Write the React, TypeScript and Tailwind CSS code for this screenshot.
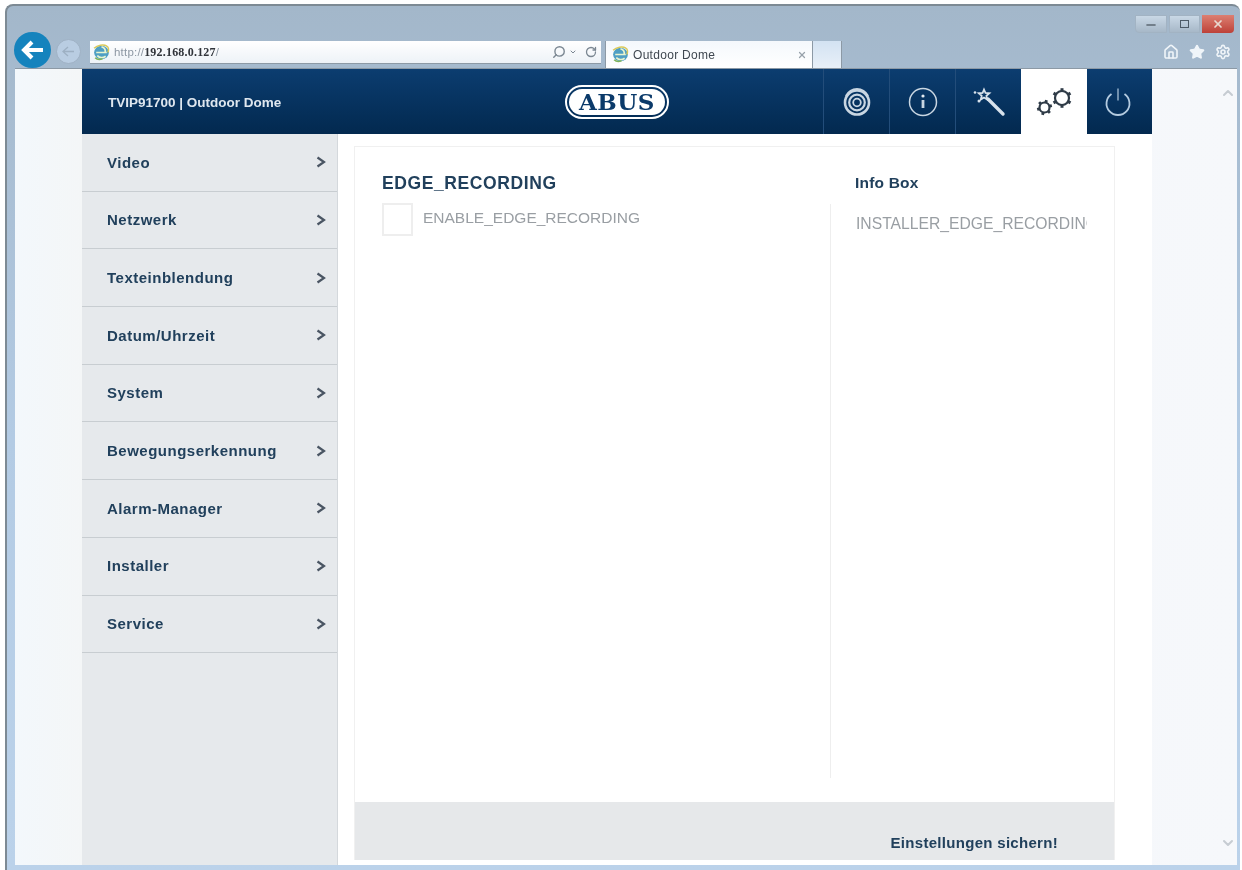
import { ChevronUp, ChevronDown, Home, Star, Settings, Search, RotateCw, X, Minus } from 'lucide-react'

const menuItems = [
  'Video',
  'Netzwerk',
  'Texteinblendung',
  'Datum/Uhrzeit',
  'System',
  'Bewegungserkennung',
  'Alarm-Manager',
  'Installer',
  'Service',
]

// small IE page icon used in address bar and tab
function IeIcon() {
  return (
    <svg width="19" height="19" viewBox="0 0 18 18" className="shrink-0">
      <ellipse cx="9" cy="9" rx="7" ry="6.5" fill="#4f9fc4" />
      <path d="M4 9h10M9 3.5c3 1 4 3 3.5 5.5M5 12c2 2 5 2.5 8 .5" stroke="#e8f4d0" strokeWidth="1.6" fill="none" />
      <path d="M2 5c3-3 9-4 12-2 2 1 2 4 1 6" stroke="#d9c95a" strokeWidth="1.4" fill="none" />
      <path d="M3 14c1 1 4 2 7 1" stroke="#7fb35a" strokeWidth="1.5" fill="none" />
    </svg>
  )
}

function CameraIcon() {
  return (
    <svg width="32" height="32" viewBox="0 0 32 32" fill="none" stroke="#c9d6e2">
      <circle cx="16" cy="16.500" r="12" strokeWidth="2.600" />
      <circle cx="16" cy="16.500" r="7.800" strokeWidth="2.200" />
      <circle cx="16" cy="16.500" r="3.800" strokeWidth="1.800" />
      <path d="M5 10C8 4.500 12 3 16 3s8 1.500 11 7" strokeWidth="2.200" />
    </svg>
  )
}

function InfoIcon() {
  return (
    <svg width="30" height="30" viewBox="0 0 30 30" fill="none" stroke="#c9d6e2">
      <circle cx="15" cy="15" r="13.500" strokeWidth="1.500" />
      <path d="M15 13v8" strokeWidth="2.800" />
      <circle cx="15" cy="9" r="1.600" fill="#e4ebf2" stroke="none" />
    </svg>
  )
}

function WandIcon() {
  return (
    <svg width="34" height="30" viewBox="0 0 34 30" fill="none" stroke="#d8e2ec">
      <path d="M16 12l15 15" strokeWidth="3.400" strokeLinecap="round" />
      <path d="M12 2.500l1.500 3.500 3.800.300-2.900 2.500.9 3.700-3.300-2-3.200 2 .9-3.700-2.900-2.500 3.800-.300z" strokeWidth="1.800" />
      <circle cx="3" cy="5.500" r="1.300" fill="#d8e2ec" stroke="none" />
      <circle cx="7" cy="14" r="1.500" fill="#d8e2ec" stroke="none" />
    </svg>
  )
}

function GearsIcon() {
  const teeth = [0, 60, 120, 180, 240, 300]
  return (
    <svg width="38" height="28" viewBox="0 0 38 28" fill="none" stroke="#2f3b47">
      <g transform="translate(9.500 19.500)">
        <circle r="5" strokeWidth="2.200" />
        {teeth.map((a) => (
          <path key={a} d="M0 -5V-7.600" strokeWidth="2.800" transform={`rotate(${a + 15})`} />
        ))}
      </g>
      <g transform="translate(27 10)">
        <circle r="7" strokeWidth="2.200" />
        {teeth.map((a) => (
          <path key={a} d="M0 -7V-9.800" strokeWidth="3" transform={`rotate(${a})`} />
        ))}
      </g>
    </svg>
  )
}

function PowerIcon() {
  return (
    <svg width="28" height="30" viewBox="0 0 28 30" fill="none" stroke="#b4cbe0" strokeWidth="1.800">
      <path d="M7.500 7a11.500 11.500 0 1 0 13 0" />
      <path d="M14 1.500v12" strokeWidth="1.200" />
    </svg>
  )
}

function HeaderTab({ children, active }: { children: React.ReactNode; active?: boolean }) {
  return (
    <div
      className={`w-[66px] h-full flex items-center justify-center ${
        active ? 'bg-white' : 'border-l border-[#234d7a]'
      }`}
    >
      {children}
    </div>
  )
}

function MenuChevron() {
  return (
    <svg width="10" height="12" viewBox="0 0 10 12" fill="none" stroke="#4a5563" strokeWidth="2.200">
      <path d="M1.500 1.500L8 6l-6.500 4.500" />
    </svg>
  )
}

export default function App() {
  return (
    <div className="w-[1242px] h-[870px] overflow-hidden bg-white pt-[4px] pl-[5px] pr-[2px] blur-[0.5px] font-['Liberation_Sans',Arial,sans-serif]">
      <div className="h-full flex flex-col rounded-t-lg border-t-2 border-l-2 border-[#7d8a94] bg-gradient-to-b from-[#a3b7ca] via-[#b3cbe4] to-[#bbd2ea] pl-[8px] pr-[3px] pb-[5px]">
        {/* Browser chrome */}
        <div className="h-[62px] shrink-0 flex relative">
          <div className="flex items-end gap-[5px] -ml-[1px]">
            <div className="w-[37px] h-[36px] rounded-full bg-[#1583bd] flex items-center justify-center">
              <svg width="24" height="20" viewBox="0 0 24 20" fill="none" stroke="white" strokeWidth="4">
                <path d="M22 10H4M11 2l-8 8 8 8" />
              </svg>
            </div>
            <div className="w-[25px] h-[25px] mb-[4px] rounded-full border border-[#9fb1c4] bg-[#b9cde2] flex items-center justify-center">
              <svg width="13" height="11" viewBox="0 0 13 11" fill="none" stroke="#9db0c3" strokeWidth="1.300">
                <path d="M12 5.500H1M6 1L1 5.500 6 10" />
              </svg>
            </div>
            <div className="w-[511px] h-[23px] mb-[4px] ml-[4px] flex items-center pl-[2px] bg-gradient-to-b from-white to-[#edf2f7] border-b border-[#8c99a5]">
              <IeIcon />
              <span className="ml-[3px] text-[11.500px] text-[#8c97a3] tracking-[0.2px]">
                http://<span className="text-[#30343a] font-['Liberation_Serif',serif] font-bold text-[12px]">192.168.0.127</span>/
              </span>
              <div className="ml-auto mr-[4px] flex items-center gap-[3px] text-[#7b8792]">
                <Search size={14} strokeWidth={2.400} className="-scale-x-100" />
                <ChevronDown size={8} strokeWidth={3} />
                <RotateCw size={12} strokeWidth={2.600} className="ml-[5px]" />
              </div>
            </div>
            <div className="-ml-[1px] w-[208px] h-[27px] flex items-center pl-[5px] bg-gradient-to-b from-[#f4f8fc] to-white border-l border-r border-[#8c99a5]">
              <IeIcon />
              <span className="ml-[3px] text-[12px] text-[#3f4750] tracking-[0.3px]">Outdoor Dome</span>
              <X size={10} strokeWidth={3} className="ml-auto mr-[5px] text-[#98a2ab]" />
            </div>
            <div className="-ml-[5px] w-[29px] h-[27px] bg-gradient-to-b from-[#d3e2f2] to-[#e8f0f8] border-r border-[#8c99a5]" />
          </div>
          <div className="ml-auto flex flex-col items-end pt-[9px] mr-[3px]">
            <div className="flex gap-[2px] h-[18px]">
              <div className="w-[32px] flex items-end justify-center rounded-bl bg-gradient-to-b from-[#c9d8e6] to-[#a7b8c8] border border-[#a2b3c3]">
                <Minus size={14} strokeWidth={2.500} className="text-[#5c6873]" />
              </div>
              <div className="w-[31px] flex items-center justify-center bg-gradient-to-b from-[#c9d8e6] to-[#a7b8c8] border border-[#a2b3c3]">
                <div className="w-[9px] h-[8px] border border-[#4d5a66]" />
              </div>
              <div className="w-[32px] flex items-center justify-center rounded-br bg-gradient-to-b from-[#dc7f72] to-[#bd4038]">
                <X size={12} strokeWidth={3.500} className="text-[#e9d9d0]" />
              </div>
            </div>
            <div className="flex gap-[10px] mt-[11px] mr-[3px] text-[#f0f5f9]">
              <Home size={16} strokeWidth={2.400} />
              <Star size={16} fill="currentColor" />
              <Settings size={16} strokeWidth={2.400} />
            </div>
          </div>
        </div>

        {/* Page area */}
        <div className="flex-1 min-h-0 flex bg-gradient-to-r from-[#f0f5fa] to-[#f6f8fb] border-t border-[#8c99a5]">
          <div className="w-[67px] shrink-0 bg-gradient-to-r from-[#f3f8fc] to-[#f4f6f7]" />

          <div className="w-[1070px] shrink-0 flex flex-col bg-white">
            {/* Header */}
            <div className="h-[65px] shrink-0 flex items-center bg-gradient-to-b from-[#0c3d70] to-[#03294f]">
              <div className="w-[741px] shrink-0 pl-[26px] flex items-center relative">
                <span className="mt-[3px] text-[13.500px] font-bold text-[#dfe7ef]">TVIP91700 | Outdoor Dome</span>
                <div className="absolute left-[483px] w-[104px] h-[34px] rounded-full border-2 border-white p-[2px]">
                  <div className="h-full rounded-full bg-white flex items-center justify-center">
                    <span className="font-['DejaVu_Serif',serif] font-bold text-[23px] leading-none text-[#0b3a6a] tracking-[0.5px]">ABUS</span>
                  </div>
                </div>
              </div>
              <div className="h-full flex">
                <HeaderTab><CameraIcon /></HeaderTab>
                <HeaderTab><InfoIcon /></HeaderTab>
                <HeaderTab><WandIcon /></HeaderTab>
                <HeaderTab active><GearsIcon /></HeaderTab>
                <div className="w-[65px] h-full flex items-center justify-center pr-[3px]"><PowerIcon /></div>
              </div>
            </div>

            <div className="flex-1 min-h-0 flex">
              {/* Sidebar */}
              <div className="w-[256px] shrink-0 bg-[#e6e9ec] border-r border-[#d4d8dc]">
                {menuItems.map((item) => (
                  <div
                    key={item}
                    className="h-[57.700px] flex items-center justify-between pl-[25px] pr-[11px] border-b border-[#c8cdd1]"
                  >
                    <span className="mt-[1px] text-[15px] font-bold text-[#21405c] tracking-[0.5px]">{item}</span>
                    <MenuChevron />
                  </div>
                ))}
              </div>

              {/* Content */}
              <div className="flex-1 min-w-0 pl-[16px] pr-[37px] pt-[12px] pb-[5px]">
                <div className="h-full flex flex-col border-t border-l border-r border-[#f0f0f0]">
                  <div className="flex-1 min-h-0 flex pb-[24px]">
                    <div className="w-[475px] shrink-0 pl-[27px] pt-[26px]">
                      <h2 className="text-[17.500px] leading-[20px] font-bold text-[#21405c] tracking-[0.6px]">EDGE_RECORDING</h2>
                      <div className="mt-[10px] flex">
                        <div className="w-[31px] h-[33px] border-2 border-[#eeeeee]" />
                        <span className="ml-[10px] mt-[6px] text-[15.500px] leading-[18px] text-[#999ea3]">ENABLE_EDGE_RECORDING</span>
                      </div>
                    </div>
                    <div className="flex-1 min-w-0 flex flex-col pt-[26px]">
                      <h3 className="pl-[25px] text-[15.500px] leading-[20px] font-bold text-[#21405c] tracking-[0.2px]">Info Box</h3>
                      <div className="flex-1 mt-[11px] border-l border-[#eeeeee] pl-[25px] pr-[27px] pt-[11px]">
                        <p className="overflow-hidden whitespace-nowrap text-[15.700px] leading-[18px] text-[#999ea3]">INSTALLER_EDGE_RECORDING</p>
                      </div>
                    </div>
                  </div>
                  <div className="h-[58px] shrink-0 bg-[#e6e8ea] flex items-center justify-end pr-[56px] pt-[24px]">
                    <span className="text-[15px] font-bold text-[#21405c] tracking-[0.3px]">Einstellungen sichern!</span>
                  </div>
                </div>
              </div>
            </div>
          </div>

          {/* Scrollbar gutter */}
          <div className="flex-1 min-w-0 flex flex-col items-end justify-between pr-[1px] pt-[16px] pb-[14px]">
            <ChevronUp size={16} strokeWidth={3} className="text-[#c6ccd2]" />
            <ChevronDown size={16} strokeWidth={3} className="text-[#c6ccd2]" />
          </div>
        </div>
      </div>
    </div>
  )
}
